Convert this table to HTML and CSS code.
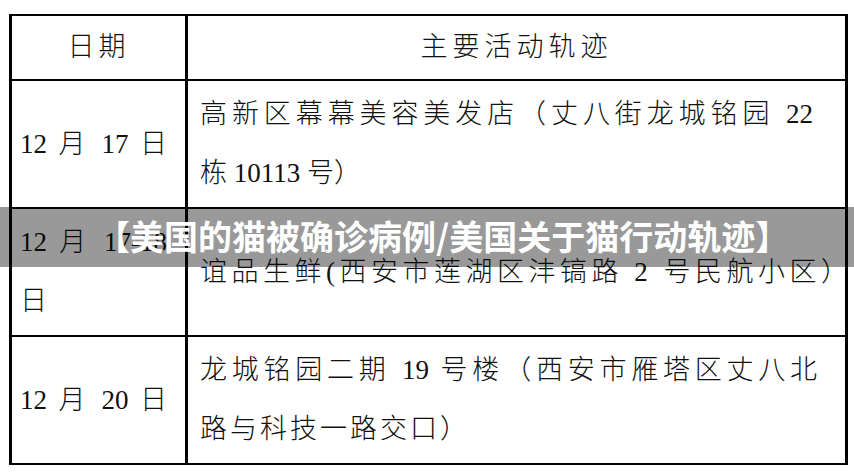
FILE: index.html
```html
<!DOCTYPE html>
<html lang="zh-CN">
<head>
<meta charset="utf-8">
<title>美国的猫被确诊病例</title>
<link rel="stylesheet" href="styles.css">
</head>
<body>
<div class="page">
  <table class="trace">
    <colgroup><col class="c-date"><col class="c-desc"></colgroup>
    <thead>
      <tr><th class="h-date">日期</th><th class="h-desc">主要活动轨迹</th></tr>
    </thead>
    <tbody>
      <tr>
        <td class="date">12 月 17 日</td>
        <td class="desc"><span class="ln full first">高新区幕幕美容美发店（丈八街龙城铭园 22</span><span class="ln">栋 10113 号）</span></td>
      </tr>
      <tr>
        <td class="date">12 月 17-18 日</td>
        <td class="desc"><span class="ln spread">谊品生鲜(西安市莲湖区沣镐路 2 号民航小区）</span></td>
      </tr>
      <tr>
        <td class="date">12 月 20 日</td>
        <td class="desc"><span class="ln full">龙城铭园二期 19 号楼（西安市雁塔区丈八北</span><span class="ln loose">路与科技一路交口）</span></td>
      </tr>
    </tbody>
  </table>
  <div class="banner">【美国的猫被确诊病例/美国关于猫行动轨迹】</div>
</div>
</body>
</html>
```

FILE: styles.css
```css
html, body {
  margin: 0;
  padding: 0;
  background: #ffffff;
}
.page {
  position: relative;
  width: 854px;
  height: 474px;
  overflow: hidden;
  background: #ffffff;
}
.trace {
  margin: 14px 0 0 9px;
  width: 839px;
  table-layout: fixed;
  border-collapse: separate;
  border-spacing: 0;
  border-top: 2px solid #000;
  border-left: 3px solid #000;
  font-family: "Liberation Serif", "Noto Sans CJK SC", serif;
  font-weight: 300;
  font-size: 27px;
  color: #111;
}
.c-date { width: 176px; }
.c-desc { width: 660px; }
.trace th,
.trace td {
  border-right: 3px solid #000;
  border-bottom: 2px solid #000;
  vertical-align: middle;
  font-weight: 300;
  padding: 4px 0;
}
.trace th {
  line-height: 55px;
  text-align: center;
}
.h-date { letter-spacing: 4px; padding-left: 4px; }
.h-desc { letter-spacing: 5px; padding-left: 5px; }
.trace td {
  line-height: 59px;
}
.date {
  padding-left: 8px !important;
  padding-right: 18px !important;
  text-align: justify;
  text-align-last: justify;
}
.desc {
  padding-left: 12px !important;
  padding-right: 28px !important;
  text-align: left;
}
.ln { display: block; white-space: nowrap; }
.full {
  text-align: justify;
  text-align-last: justify;
}
.first { margin-right: 4px; }
.spread { letter-spacing: 4.5px; }
.loose { letter-spacing: 3px; }
.banner {
  position: absolute;
  left: 0;
  top: 207px;
  width: 854px;
  height: 60px;
  background: rgba(0, 0, 0, 0.4);
  color: #ffffff;
  font-family: "Noto Sans CJK SC", sans-serif;
  font-weight: 700;
  font-size: 34px;
  line-height: 58px;
  padding-left: 96px;
  box-sizing: border-box;
  white-space: nowrap;
}
```
